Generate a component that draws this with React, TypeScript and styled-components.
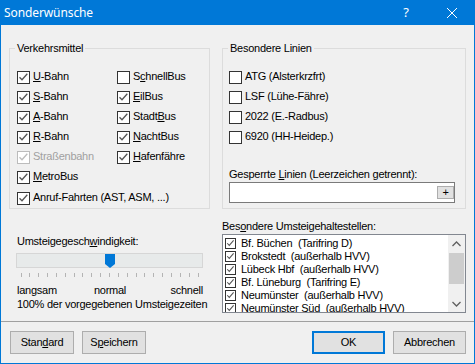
import React from "react";
import styled, { createGlobalStyle } from "styled-components";

const GlobalStyle = createGlobalStyle`
  html, body {
    margin: 0;
    padding: 0;
    background: #f0f0f0;
  }
  * { box-sizing: border-box; }
`;

const leftChecks = [
  { label: "U-Bahn", key: "U", checked: true },
  { label: "SchnellBus", key: "c", checked: false },
  { label: "S-Bahn", key: "S", checked: true },
  { label: "EilBus", key: "E", checked: true },
  { label: "A-Bahn", key: "A", checked: true },
  { label: "StadtBus", key: "B", checked: true },
  { label: "R-Bahn", key: "R", checked: true },
  { label: "NachtBus", key: "N", checked: true },
  { label: "Straßenbahn", key: "", checked: true, disabled: true },
  { label: "Hafenfähre", key: "H", checked: true },
  { label: "MetroBus", key: "M", checked: true },
];

const lines = ["ATG (Alsterkrzfrt)", "LSF (Lühe-Fähre)", "2022 (E.-Radbus)", "6920 (HH-Heidep.)"];

const stops = [
  "Bf. Büchen  (Tarifring D)",
  "Brokstedt  (außerhalb HVV)",
  "Lübeck Hbf  (außerhalb HVV)",
  "Bf. Lüneburg  (Tarifring E)",
  "Neumünster  (außerhalb HVV)",
  "Neumünster Süd  (außerhalb HVV)",
];

// underline the mnemonic letter
function Mnemonic({ text, letter }: { text: string; letter: string }) {
  const i = letter ? text.indexOf(letter) : -1;
  if (i < 0) return <span>{text}</span>;
  return (
    <span>
      {text.slice(0, i)}
      <u>{text[i]}</u>
      {text.slice(i + 1)}
    </span>
  );
}

function CheckBox({ checked, disabled, small }: { checked: boolean; disabled?: boolean; small?: boolean }) {
  return (
    <Box $disabled={disabled} $small={small}>
      {checked && (
        <svg width="11" height="11" viewBox="0 0 11 11">
          <path d="M1.5 5.2 L4 7.8 L9.3 1.8" fill="none" stroke={disabled ? "#bcbcbc" : "#555"} strokeWidth="1.3" />
        </svg>
      )}
    </Box>
  );
}

function Slider() {
  const ticks = Array.from({ length: 21 }, (_, i) => 5.5 + i * 8.85);
  return (
    <SliderWrap>
      <Track>
        <Thumb>
          <svg width="10" height="14" viewBox="0 0 10 14">
            <path d="M0 0 H10 V10 L5 14 L0 10 Z" fill="#0078d7" />
          </svg>
        </Thumb>
      </Track>
      <Ticks width="187" height="4" viewBox="0 0 187 4">
        {ticks.map((x, i) => (
          <line key={i} x1={Math.round(x) - 0.5} x2={Math.round(x) - 0.5} y1="0" y2="4" stroke="#b4b4b4" strokeWidth="1" />
        ))}
      </Ticks>
    </SliderWrap>
  );
}

export default function App() {
  return (
    <>
      <GlobalStyle />
      <Window>
        <TitleBar>
          <Title>Sonderwünsche</Title>
          <HelpButton>?</HelpButton>
          <CloseButton>
            <svg width="10" height="10" viewBox="0 0 10 10">
              <path d="M0 0 L10 10 M10 0 L0 10" stroke="#fff" strokeWidth="1" />
            </svg>
          </CloseButton>
        </TitleBar>
        <Body>
          <TopRow>
            <Group>
              <Legend>Verkehrsmittel</Legend>
              <CheckGrid $pad={7}>
                {leftChecks.map((c) => (
                  <CheckRow key={c.label} $disabled={c.disabled}>
                    <CheckBox checked={c.checked} disabled={c.disabled} />
                    <Mnemonic text={c.label} letter={c.key} />
                  </CheckRow>
                ))}
                <LastRow>
                  <CheckBox checked />
                  <span>Anruf-Fahrten (AST, ASM, ...)</span>
                </LastRow>
              </CheckGrid>
            </Group>
            <Group>
              <Legend>Besondere Linien</Legend>
              <LineList>
                {lines.map((l) => (
                  <CheckRow key={l}>
                    <CheckBox checked={false} />
                    <span>{l}</span>
                  </CheckRow>
                ))}
                <FieldLabel>
                  Gesperrte <u>L</u>inien (Leerzeichen getrennt):
                </FieldLabel>
                <Field>
                  <FieldInput />
                  <PlusButton>+</PlusButton>
                </Field>
              </LineList>
            </Group>
          </TopRow>
          <MiddleRow>
            <SpeedPanel>
              <Text>
                Umsteigegesch<u>w</u>indigkeit:
              </Text>
              <Slider />
              <ScaleLabels>
                <span>langsam</span>
                <span>normal</span>
                <RightText>schnell</RightText>
              </ScaleLabels>
              <Text>100% der vorgegebenen Umsteigezeiten</Text>
            </SpeedPanel>
            <StopsPanel>
              <Text>
                Bes<u>o</u>ndere Umsteigehaltestellen:
              </Text>
              <ListBox>
                <ListItems>
                  {stops.map((s) => (
                    <ListItem key={s}>
                      <CheckBox checked small />
                      <ItemText>{s}</ItemText>
                    </ListItem>
                  ))}
                </ListItems>
                <ScrollBar>
                  <ScrollArrow>
                    <svg width="9" height="6" viewBox="0 0 9 6">
                      <path d="M0.5 5 L4.5 1 L8.5 5" fill="none" stroke="#606060" strokeWidth="1.3" />
                    </svg>
                  </ScrollArrow>
                  <ScrollTrack>
                    <ScrollThumb />
                  </ScrollTrack>
                  <ScrollArrow>
                    <svg width="9" height="6" viewBox="0 0 9 6">
                      <path d="M0.5 1 L4.5 5 L8.5 1" fill="none" stroke="#606060" strokeWidth="1.3" />
                    </svg>
                  </ScrollArrow>
                </ScrollBar>
              </ListBox>
            </StopsPanel>
          </MiddleRow>
          <Separator />
          <ButtonRow>
            <Button $w={64}>
              <span>
                Stan<u>d</u>ard
              </span>
            </Button>
            <Button $w={64}>
              <span>
                S<u>p</u>eichern
              </span>
            </Button>
            <Spacer />
            <Button $w={73} $default>
              OK
            </Button>
            <Button $w={73}>Abbrechen</Button>
          </ButtonRow>
        </Body>
      </Window>
    </>
  );
}

const Window = styled.div`
  width: 475px;
  height: 364px;
  display: flex;
  flex-direction: column;
  font-family: "Liberation Sans", Arial, sans-serif;
  font-size: 11px;
  line-height: 13px;
  letter-spacing: -0.25px;
  color: #000;
`;

const TitleBar = styled.div`
  height: 25px;
  background: #0078d7;
  color: #fff;
  display: flex;
  align-items: center;
  padding-left: 4px;
  font-family: "Noto Sans", "Liberation Sans", sans-serif;
  font-size: 12px;
  letter-spacing: 0;
`;

const Title = styled.div`
  flex: 1;
  letter-spacing: -0.1px;
`;

const HelpButton = styled.div`
  width: 46px;
  text-align: center;
  font-size: 13px;
`;

const CloseButton = styled.div`
  width: 46px;
  display: flex;
  justify-content: center;
  svg { display: block; }
`;

const Body = styled.div`
  flex: 1;
  background: #f0f0f0;
  border: 1px solid #0078d7;
  border-top: none;
  display: flex;
  flex-direction: column;
`;

const TopRow = styled.div`
  display: grid;
  grid-template-columns: 201px 244px;
  column-gap: 12px;
  padding: 0 8px;
  margin-top: 17px;
`;

const Group = styled.fieldset`
  margin: 0;
  padding: 0;
  height: 167px;
  border: 1px solid #dcdcdc;
  min-width: 0;
`;

const Legend = styled.legend`
  margin-left: 5px;
  padding: 0 2px;
  line-height: 13px;
`;

const CheckGrid = styled.div<{ $pad: number }>`
  display: grid;
  grid-template-columns: 100px 1fr;
  grid-auto-rows: 20px;
  padding: 15px 0 0 ${(p) => p.$pad}px;
`;

const CheckRow = styled.div<{ $disabled?: boolean }>`
  display: flex;
  align-items: flex-start;
  gap: 3px;
  height: 20px;
  white-space: nowrap;
  color: ${(p) => (p.$disabled ? "#a0a0a0" : "#000")};
`;

const LastRow = styled(CheckRow)`
  grid-column: 1 / span 2;
  margin-top: 1px;
`;

const Box = styled.span<{ $disabled?: boolean; $small?: boolean }>`
  width: ${(p) => (p.$small ? 11 : 13)}px;
  height: ${(p) => (p.$small ? 11 : 13)}px;
  margin-top: 1px;
  flex: none;
  background: #fff;
  border: 1px solid ${(p) => (p.$disabled ? "#bcbcbc" : "#333")};
  display: flex;
  align-items: center;
  justify-content: center;
  svg { display: block; }
`;

const LineList = styled.div`
  display: flex;
  flex-direction: column;
  padding: 15px 10px 0 6px;
`;

const FieldLabel = styled.div`
  margin-top: 18px;
`;

const Field = styled.div`
  margin-top: 1px;
  height: 21px;
  background: #fff;
  border: 1px solid #7a7a7a;
  display: flex;
  align-items: center;
`;

const FieldInput = styled.input`
  flex: 1;
  min-width: 0;
  border: none;
  outline: none;
  background: transparent;
  font: inherit;
  padding: 0 2px;
`;

const PlusButton = styled.div`
  width: 17px;
  height: 13px;
  background: #e1e1e1;
  border: 1px solid #adadad;
  font-size: 11px;
  line-height: 10px;
  text-align: center;
`;

const MiddleRow = styled.div`
  display: grid;
  grid-template-columns: 201px 244px;
  column-gap: 12px;
  padding: 0 8px;
`;

const Text = styled.div`
  white-space: nowrap;
`;

const SpeedPanel = styled.div`
  padding: 26px 0 0 8px;
  display: flex;
  flex-direction: column;
`;

const SliderWrap = styled.div`
  margin: 5px 0 0 -1px;
  width: 187px;
`;

const Track = styled.div`
  position: relative;
  height: 15px;
  background: #e7eaea;
  border: 1px solid #d6d6d6;
`;

const Thumb = styled.div`
  position: absolute;
  left: 88px;
  top: 0;
  svg { display: block; }
`;

const Ticks = styled.svg`
  display: block;
  margin-top: 5px;
`;

const ScaleLabels = styled.div`
  display: grid;
  grid-template-columns: 1fr auto 1fr;
  width: 186px;
  margin-top: 7px;
  margin-bottom: 1px;
`;

const RightText = styled.span`
  text-align: right;
`;

const StopsPanel = styled.div`
  padding-top: 11px;
  display: flex;
  flex-direction: column;
`;

const ListBox = styled.div`
  margin-top: 1px;
  height: 79px;
  background: #fff;
  border: 1px solid #828790;
  display: flex;
  overflow: hidden;
`;

const ListItems = styled.div`
  flex: 1;
  padding: 2px 0 0 2px;
  overflow: hidden;
`;

const ListItem = styled.div`
  display: flex;
  align-items: flex-start;
  gap: 5px;
  height: 13px;
  white-space: pre;
`;

const ItemText = styled.span`
  line-height: 13px;
`;

const ScrollBar = styled.div`
  width: 17px;
  background: #f0f0f0;
  display: flex;
  flex-direction: column;
`;

const ScrollArrow = styled.div`
  height: 17px;
  display: flex;
  align-items: center;
  justify-content: center;
  svg { display: block; }
`;

const ScrollTrack = styled.div`
  flex: 1;
  padding: 1px 1px 0;
`;

const ScrollThumb = styled.div`
  height: 31px;
  background: #cdcdcd;
`;

const Separator = styled.div`
  margin-top: 8px;
  height: 1px;
  background: #a0a0a0;
`;

const ButtonRow = styled.div`
  display: flex;
  gap: 8px;
  padding: 9px 8px 0 9px;
`;

const Spacer = styled.div`
  flex: 1;
`;

const Button = styled.div<{ $w: number; $default?: boolean }>`
  width: ${(p) => p.$w}px;
  height: 23px;
  background: #e1e1e1;
  border: ${(p) => (p.$default ? "2px solid #0078d7" : "1px solid #adadad")};
  display: flex;
  align-items: center;
  justify-content: center;
  font-size: 11px;
`;
